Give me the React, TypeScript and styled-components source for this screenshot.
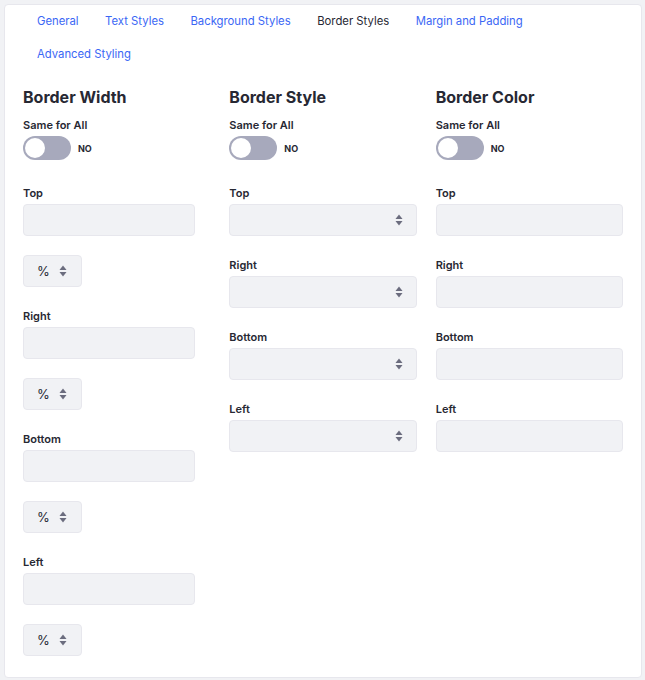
import styled, { createGlobalStyle } from "styled-components";

const GlobalStyle = createGlobalStyle`
  body {
    margin: 0;
    background-color: #f1f2f5;
    font-family: Inter, "Noto Sans", "Liberation Sans", sans-serif;
    color: #272833;
  }
`;

const Card = styled.div`
  margin: 4px 3px 4px 4px;
  background-color: #fff;
  border: 1px solid #e7e7ed;
  border-radius: 4px;
  padding: 0 18px 21px 18px;
`;

const Tabs = styled.nav`
  display: flex;
  flex-wrap: wrap;
  padding-right: 60px;
`;

const Tab = styled.a<{ $active?: boolean }>`
  display: block;
  padding: 8px 12.5px 8px 14px;
  font-size: 11.3px;
  line-height: 17px;
  color: ${(p) => (p.$active ? "#272833" : "#3b67f5")};
  text-decoration: none;
  cursor: pointer;
`;

const Columns = styled.div`
  display: grid;
  grid-template-columns: repeat(3, 1fr);
  column-gap: 19px;
  margin-top: 16px;
`;

const Column = styled.div`
  display: flex;
  flex-direction: column;
`;

const Heading = styled.h3`
  margin: 0 0 11px;
  font-size: 16px;
  line-height: 20px;
  font-weight: 700;
`;

const Label = styled.label`
  display: block;
  font-size: 11px;
  line-height: 14px;
  font-weight: 600;
  margin-bottom: 4px;
`;

const Group = styled.div<{ $gap?: number }>`
  margin-bottom: ${(p) => p.$gap ?? 22}px;
`;

const ToggleRow = styled.div`
  display: flex;
  align-items: center;
  gap: 7px;
  margin-top: 3px;
`;

const Toggle = styled.span`
  position: relative;
  display: block;
  width: 48px;
  height: 24px;
  border-radius: 12px;
  background-color: #a7a9bc;
  &::after {
    content: "";
    position: absolute;
    top: 2px;
    left: 2px;
    width: 20px;
    height: 20px;
    border-radius: 50%;
    background-color: #fff;
  }
`;

const ToggleText = styled.span`
  font-size: 9px;
  font-weight: 700;
`;

const Input = styled.div<{ $width?: number }>`
  box-sizing: border-box;
  height: 32px;
  width: ${(p) => (p.$width ? `${p.$width}px` : "100%")};
  background-color: #f1f2f5;
  border: 1px solid #e7e7ed;
  border-radius: 4px;
`;

const Select = styled(Input)`
  display: flex;
  align-items: center;
  justify-content: flex-end;
  padding: 0 13px;
`;

const Unit = styled(Select)`
  width: 59px;
  justify-content: space-between;
  padding: 0 14px 0 13px;
  margin-top: 19px;
  font-size: 13px;
  color: #272833;
`;

const Arrows = () => (
  <svg width="8" height="12" viewBox="0 0 8 12">
    <path d="M4 0.5 L7.5 5 H0.5 Z" fill="#6b6c7e" />
    <path d="M4 11.5 L7.5 7 H0.5 Z" fill="#6b6c7e" />
  </svg>
);

const sides = ["Top", "Right", "Bottom", "Left"];

const SameForAll = () => (
  <Group $gap={26}>
    <Label>Same for All</Label>
    <ToggleRow>
      <Toggle />
      <ToggleText>NO</ToggleText>
    </ToggleRow>
  </Group>
);

const App = () => {
  return (
    <>
      <GlobalStyle />
      <Card>
        <Tabs>
          <Tab>General</Tab>
          <Tab>Text Styles</Tab>
          <Tab>Background Styles</Tab>
          <Tab $active>Border Styles</Tab>
          <Tab>Margin and Padding</Tab>
          <Tab>Advanced Styling</Tab>
        </Tabs>
        <Columns>
          <Column>
            <Heading>Border Width</Heading>
            <SameForAll />
            {sides.map((side, i) => (
              <Group key={side} $gap={i === 3 ? 0 : 22}>
                <Label>{side}</Label>
                <Input $width={172} />
                <Unit>
                  <span>%</span>
                  <Arrows />
                </Unit>
              </Group>
            ))}
          </Column>
          <Column>
            <Heading>Border Style</Heading>
            <SameForAll />
            {sides.map((side) => (
              <Group key={side} $gap={22}>
                <Label>{side}</Label>
                <Select>
                  <Arrows />
                </Select>
              </Group>
            ))}
          </Column>
          <Column>
            <Heading>Border Color</Heading>
            <SameForAll />
            {sides.map((side) => (
              <Group key={side} $gap={22}>
                <Label>{side}</Label>
                <Input />
              </Group>
            ))}
          </Column>
        </Columns>
      </Card>
    </>
  );
};

export default App;
